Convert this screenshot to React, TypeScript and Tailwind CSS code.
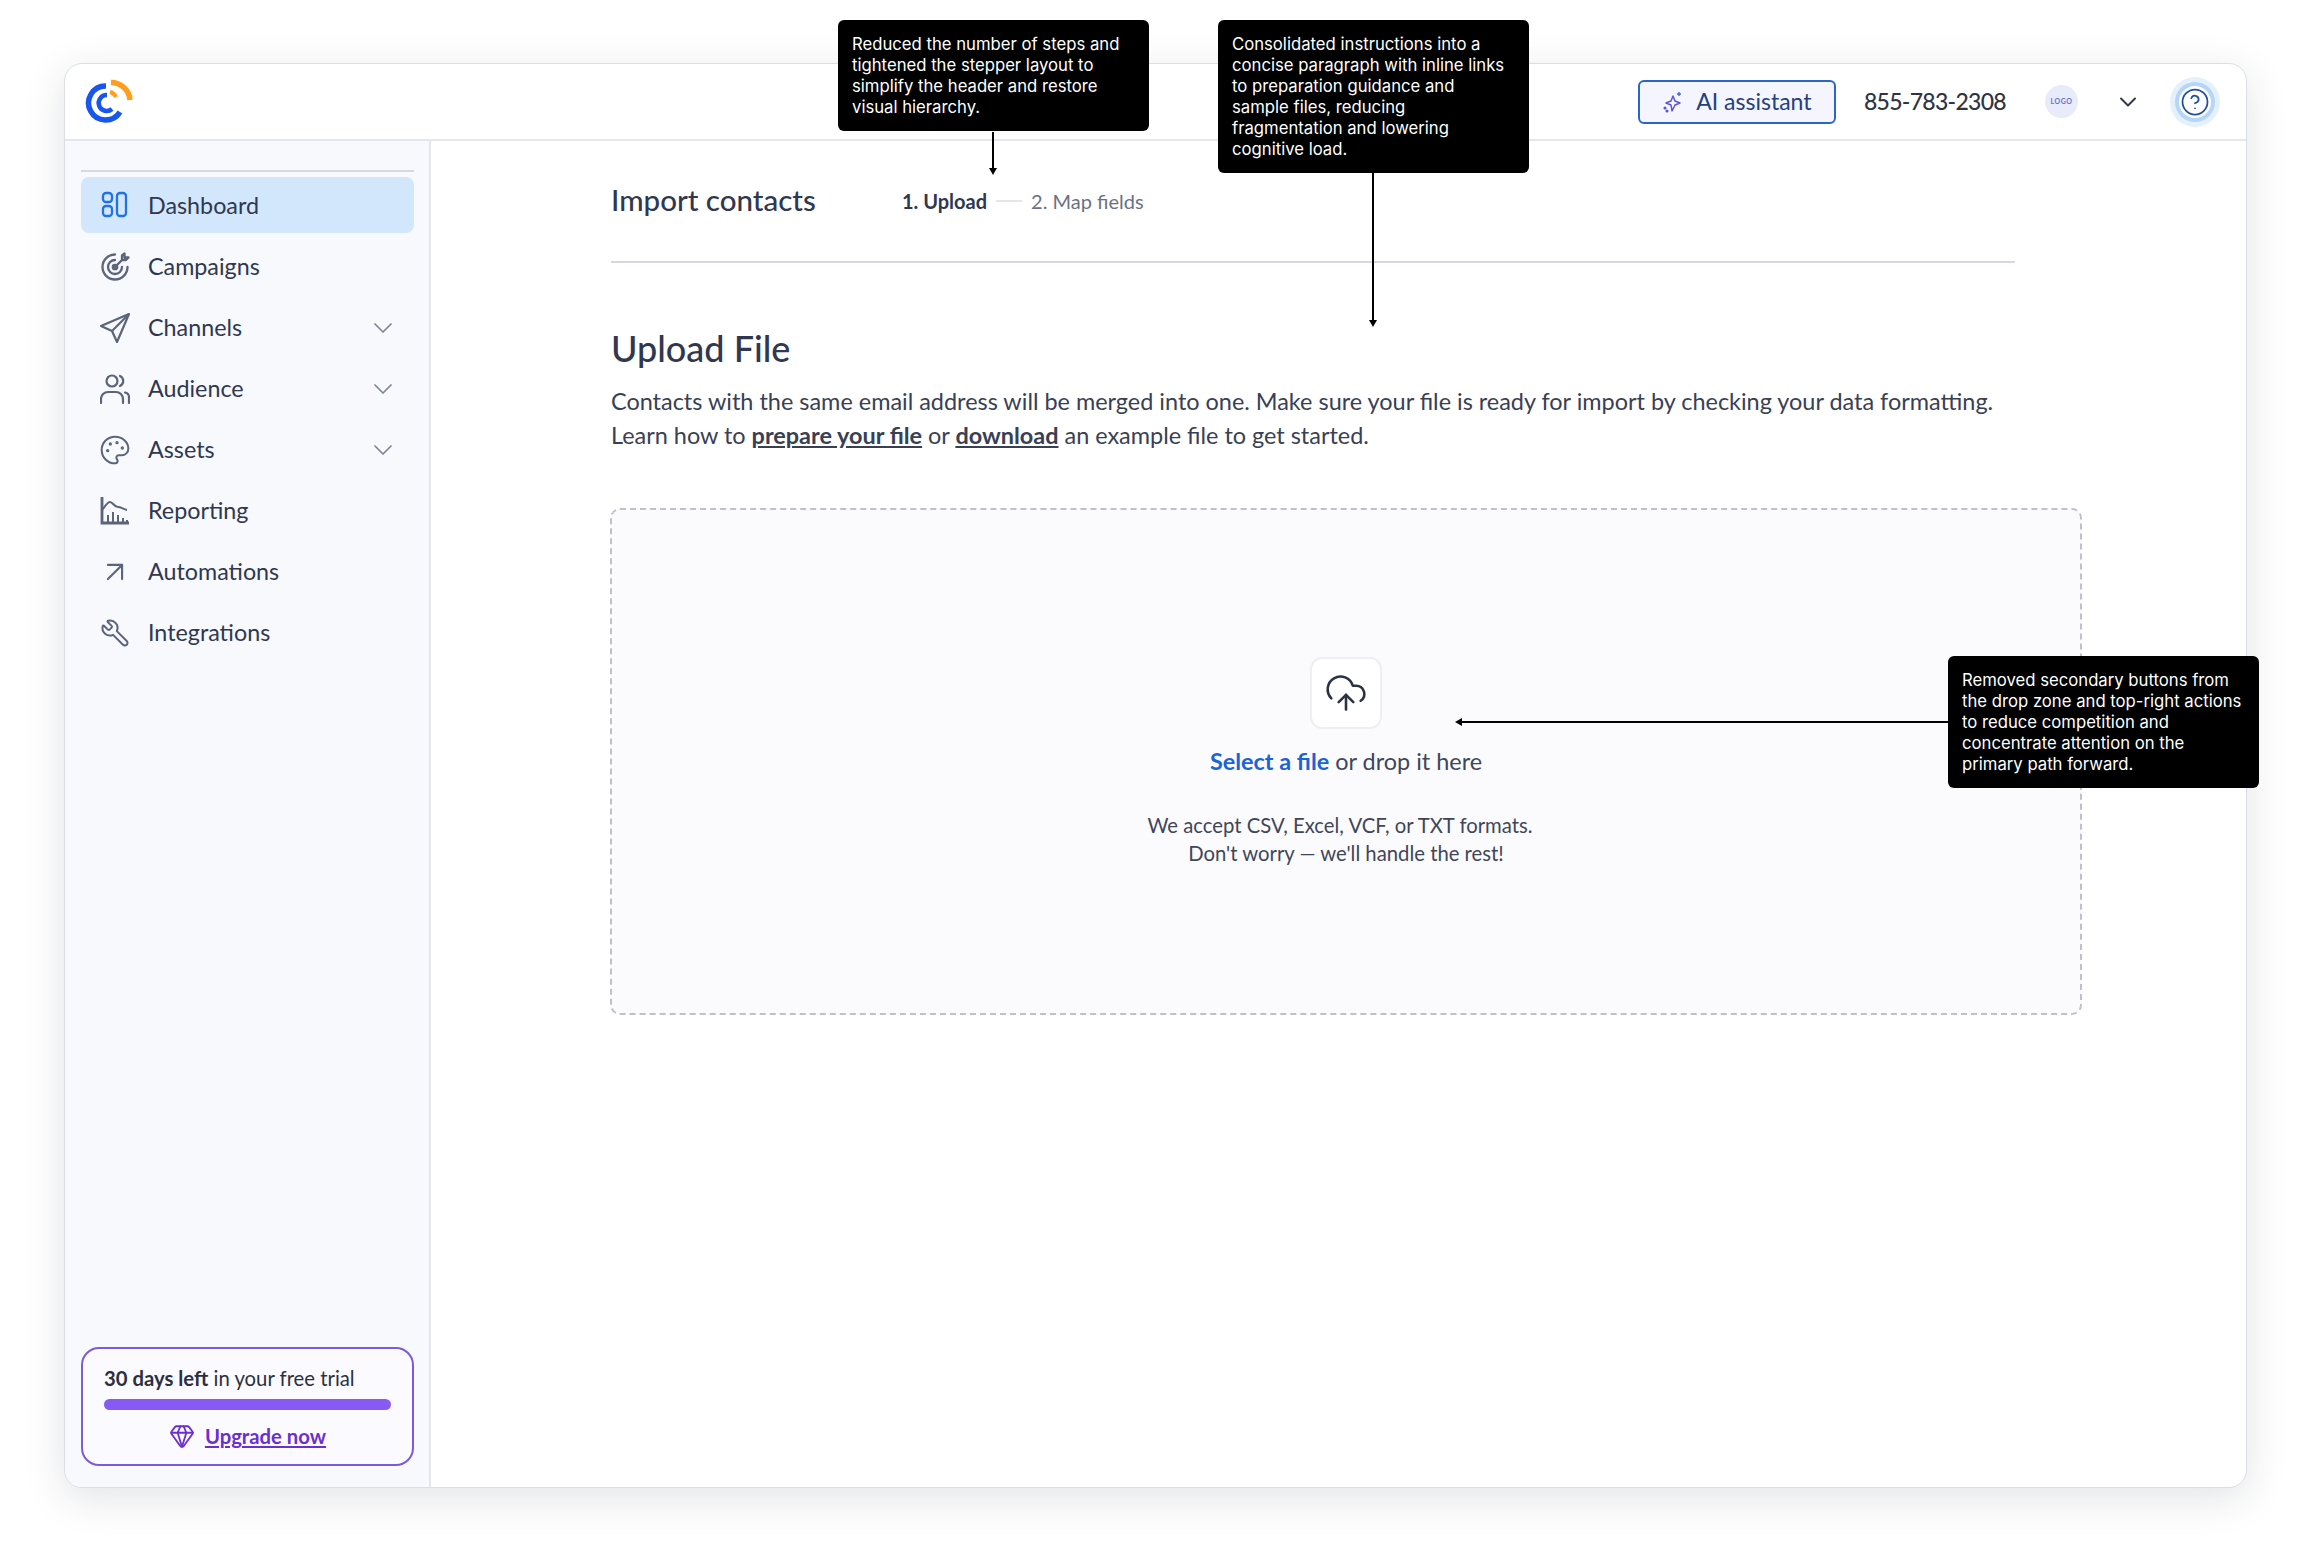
import React from 'react';
import { ChevronDown, CircleHelp, CloudUpload, Gem, Palette, Wrench, ArrowUpRight } from 'lucide-react';

const sans = "font-['Lato','Noto_Sans',sans-serif]";

const Logo = () => (
  <svg width="48" height="48" viewBox="0 0 48 48" fill="none" strokeWidth="5.500">
    <path d="M21 8A17 17 0 1 0 35 34" stroke="#1856ed" />
    <path d="M26 4.500A19 19 0 0 1 45 22" stroke="#ff9e1b" />
    <path d="M22 17A8 8 0 1 0 27 31" stroke="#1856ed" strokeWidth="4.500" />
    <path d="M25 14A9 9 0 0 1 31 19" stroke="#ff9e1b" strokeWidth="4" />
  </svg>
);

const DashboardIcon = () => (
  <svg width="28" height="28" viewBox="0 0 28 28" fill="none" stroke="#2272e4" strokeWidth="2.300">
    <rect x="2" y="2" width="9" height="9" rx="3" />
    <rect x="2" y="15" width="9" height="10" rx="3" />
    <rect x="16" y="2" width="9" height="23" rx="3" />
  </svg>
);

const CampaignsIcon = () => (
  <svg width="30" height="30" viewBox="0 0 30 30" fill="none" stroke="#5c6479" strokeWidth="2.300" strokeLinecap="round">
    <path d="M15 2.500A12.500 12.500 0 1 0 27.500 15" />
    <path d="M15 8A7 7 0 1 0 22 15" />
    <circle cx="15" cy="15" r="2.200" />
    <path d="M15 15l7-7M22 8V3.500l2.500-2v4h4l-2.500 2.500z" strokeLinejoin="round" />
  </svg>
);

const ChannelsIcon = () => (
  <svg width="30" height="30" viewBox="0 0 30 30" fill="none" stroke="#5c6479" strokeWidth="2.200" strokeLinejoin="round">
    <path d="M29 1L1 13l11 5 5 11z" />
    <path d="M29 1L12 18" />
  </svg>
);

const AudienceIcon = () => (
  <svg width="30" height="32" viewBox="0 0 30 32" fill="none" stroke="#5c6479" strokeWidth="2.200" strokeLinecap="round">
    <circle cx="12" cy="8" r="5.500" />
    <path d="M20 3a5.500 5.500 0 0 1 0 10" />
    <path d="M1 30v-4a7 7 0 0 1 7-7h8a7 7 0 0 1 7 7v4" />
    <path d="M25 19.500a5 5 0 0 1 4 5V30" />
  </svg>
);

const ReportingIcon = () => (
  <svg width="30" height="30" viewBox="0 0 30 30" fill="none" stroke="#5c6479" strokeWidth="2">
    <path d="M2 1v26h27" strokeWidth="2.800" />
    <path d="M2 14c3-3 5-8 8-8 3 0 4 5 8 5 3 0 5 2 9 3" />
    <path d="M8 27v-8M13 27v-11M18 27v-8M23 27v-5M27 27v-3" />
  </svg>
);

const AiSparkle = () => (
  <svg width="22" height="22" viewBox="0 0 22 22" fill="none" stroke="#5b54d6" strokeWidth="1.500" strokeLinejoin="round">
    <path d="M11 5l2 5 5 2-5 2-3 6-1-6-5-2 5-2z" />
    <path d="M17 1v4M15 3h4" stroke="#3f6fe0" />
    <circle cx="3" cy="17" r="0.800" fill="#5b54d6" />
    <circle cx="5" cy="20" r="0.800" fill="#5b54d6" />
  </svg>
);

const navItems = [
  { label: 'Dashboard', icon: <DashboardIcon />, active: true },
  { label: 'Campaigns', icon: <CampaignsIcon /> },
  { label: 'Channels', icon: <ChannelsIcon />, caret: true },
  { label: 'Audience', icon: <AudienceIcon />, caret: true },
  { label: 'Assets', icon: <Palette size={32} strokeWidth={1.500} className="text-[#5c6479]" />, caret: true },
  { label: 'Reporting', icon: <ReportingIcon /> },
  { label: 'Automations', icon: <ArrowUpRight size={34} strokeWidth={1.500} className="text-[#5c6479]" /> },
  { label: 'Integrations', icon: <Wrench size={30} strokeWidth={1.600} className="-scale-x-100 text-[#5c6479]" /> },
];

const Note = ({ className, children }: { className: string; children: React.ReactNode }) => (
  <div className={`absolute z-20 w-[311px] rounded-[6px] bg-black px-[14px] pt-[14px] pb-[13px] font-['Inter',sans-serif] text-[16.700px] leading-[21px] text-white ${className}`}>
    {children}
  </div>
);

export default function App() {
  return (
    <div className={`relative h-[1552px] w-[2312px] overflow-hidden bg-white pt-[63px] pl-[64px] ${sans}`}>
      {/* annotations */}
      <Note className="top-[20px] left-[838px]">
        Reduced the number of steps and<br />tightened the stepper layout to<br />simplify the header and restore<br />visual hierarchy.
      </Note>
      <div className="absolute top-[132px] left-[992px] z-20 h-[38px] w-[2px] bg-black" />
      <div className="absolute top-[168px] left-[989px] z-20 h-0 w-0 border-x-[4px] border-t-[7px] border-x-transparent border-t-black" />

      <Note className="top-[20px] left-[1218px]">
        Consolidated instructions into a<br />concise paragraph with inline links<br />to preparation guidance and<br />sample files, reducing<br />fragmentation and lowering<br />cognitive load.
      </Note>
      <div className="absolute top-[173px] left-[1372px] z-20 h-[149px] w-[2px] bg-black" />
      <div className="absolute top-[320px] left-[1369px] z-20 h-0 w-0 border-x-[4px] border-t-[7px] border-x-transparent border-t-black" />

      <Note className="top-[656px] left-[1948px]">
        Removed secondary buttons from<br />the drop zone and top-right actions<br />to reduce competition and<br />concentrate attention on the<br />primary path forward.
      </Note>
      <div className="absolute top-[721px] left-[1462px] z-20 h-[2px] w-[486px] bg-black" />
      <div className="absolute top-[718px] left-[1455px] z-20 h-0 w-0 border-y-[4px] border-r-[7px] border-y-transparent border-r-black" />

      {/* window */}
      <div className="flex h-[1425px] w-[2183px] flex-col overflow-hidden rounded-[18px] border border-[#dcdee6] bg-white shadow-[0_10px_40px_rgba(30,35,60,0.13)]">
        <header className="flex h-[77px] shrink-0 items-center border-b-2 border-[#e4e5ed] pr-[26px] pl-[20px]">
          <Logo />
          <div className="ml-auto flex items-center">
            <button className="flex h-[44px] w-[198px] items-center justify-center gap-[12px] rounded-[6px] border-2 border-[#2a66c9] bg-[#f4f5fe] text-[23px] text-[#24407f]">
              <AiSparkle />
              AI assistant
            </button>
            <span className="ml-[28px] text-[23px] font-medium tracking-[-0.700px] text-[#2f3443]">855-783-2308</span>
            <span className="ml-[39px] flex h-[33px] w-[33px] items-center justify-center rounded-full bg-[#e8ebfa] text-[7px] font-bold tracking-[0.5px] text-[#6a70c8]">LOGO</span>
            <ChevronDown size={28} strokeWidth={1.700} className="ml-[36px] text-[#333947]" />
            <div className="ml-[28px] flex h-[50px] w-[50px] items-center justify-center rounded-full bg-[#e5f0fd]">
              <div className="flex h-[40px] w-[40px] items-center justify-center rounded-full bg-[#b6d6f8]">
                <div className="flex h-[32px] w-[32px] items-center justify-center rounded-full bg-white">
                  <CircleHelp size={30} strokeWidth={1.400} className="text-[#1f4f9f]" />
                </div>
              </div>
            </div>
          </div>
        </header>

        <div className="flex min-h-0 flex-1">
          <aside className="flex w-[366px] shrink-0 flex-col border-r-2 border-[#e4e5ed] bg-[#f7f9fd] pt-[29px] pr-[15px] pb-[21px] pl-[16px]">
            <div className="h-[2px] bg-[#d6d8e2]" />
            <nav className="mt-[5px] flex flex-col gap-[6px]">
              {navItems.map(item => (
                <div
                  key={item.label}
                  className={`flex items-center rounded-[8px] pr-[15px] ${item.active ? 'h-[56px] bg-[#d3e7fc]' : 'h-[55px]'}`}
                >
                  <span className="flex w-[67px] shrink-0 justify-center">{item.icon}</span>
                  <span className="text-[23.300px] text-[#2f3850]">{item.label}</span>
                  {item.caret && <ChevronDown size={32} strokeWidth={1.300} className="ml-auto text-[#7d8496]" />}
                </div>
              ))}
            </nav>
            <div className="mt-auto h-[119px] rounded-[18px] border-2 border-[#7b5cd6] bg-[#fbfaff] px-[21px] pt-[16px]">
              <p className="text-[20.300px] leading-[26px] text-[#2b3040]">
                <span className="font-bold">30 days left</span> in your free trial
              </p>
              <div className="mt-[8px] h-[11px] rounded-full bg-[#875bf3]" />
              <div className="mt-[11px] flex items-center justify-center gap-[10px]">
                <Gem size={26} strokeWidth={1.700} className="text-[#6b2fd0]" />
                <a className="text-[20.300px] font-bold text-[#6b2fd0] underline">Upgrade now</a>
              </div>
            </div>
          </aside>

          <main className="min-w-0 flex-1 pt-[36px] pl-[180px]">
            <div className="flex h-[47px] w-[1404px] items-center">
              <h1 className="w-[291px] text-[29.500px] font-medium text-[#2f3850]">Import contacts</h1>
              <span className="text-[20px] font-bold text-[#2f3850]">1. Upload</span>
              <span className="mx-[9px] h-[2px] w-[26px] bg-[#e4e5ed]" />
              <span className="text-[20px] text-[#6a7184]">2. Map fields</span>
            </div>
            <div className="mt-[37px] h-[2px] w-[1404px] bg-[#d6d8e0]" />
            <h2 className="mt-[60px] text-[36px] leading-[50px] font-medium text-[#2f3850]">Upload File</h2>
            <p className="mt-[11px] w-[1420px] text-[23.450px] leading-[34px] text-[#394054]">
              Contacts with the same email address will be merged into one. Make sure your file is ready for import by checking your data formatting.
              <br />
              Learn how to <a className="font-bold underline">prepare your file</a> or <a className="font-bold underline">download</a> an example file to get started.
            </p>
            <div className="mt-[56px] -ml-px flex h-[507px] w-[1472px] flex-col items-center rounded-[10px] border-2 border-dashed border-[#bfc1c9] bg-[#fbfbfe] pt-[147px]">
              <div className="flex h-[72px] w-[72px] items-center justify-center rounded-[12px] border-2 border-[#eeeef3] bg-white">
                <CloudUpload size={44} strokeWidth={1.400} className="text-[#2b3245]" />
              </div>
              <p className="mt-[15px] text-[23.450px] leading-[34px] text-[#3f4659]">
                <span className="font-bold text-[#1b63d8]">Select a file</span> or drop it here
              </p>
              <p className="mt-[33px] text-center text-[20.300px] leading-[28px] text-[#3f4659]">
                <span className="mr-[12px]">We accept CSV, Excel, VCF, or TXT formats.</span>
                <br />
                Don't worry — we'll handle the rest!
              </p>
            </div>
          </main>
        </div>
      </div>
    </div>
  );
}
